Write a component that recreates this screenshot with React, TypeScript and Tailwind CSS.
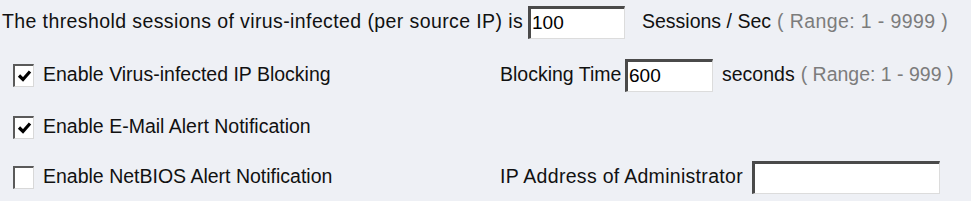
import React from 'react';

function Check({ checked }: { checked: boolean }) {
  return (
    <span className="inline-flex items-center justify-center w-[21px] h-[23px] bg-white border-t-2 border-l-2 border-t-[#5a5a5a] border-l-[#5a5a5a] border-b border-r border-b-[#d8d8d8] border-r-[#d8d8d8] shrink-0">
      {checked && (
        <svg width="15" height="14" viewBox="0 0 15 14">
          <path d="M2 6.5 L6 10.5 L13 2.5" fill="none" stroke="#000" strokeWidth="3.2" />
        </svg>
      )}
    </span>
  );
}

function Field({ value, className }: { value: string; className: string }) {
  return (
    <input
      type="text"
      defaultValue={value}
      className={`h-[33px] bg-white border-t-[3px] border-l-[3px] border-t-[#4a4a4a] border-l-[#4a4a4a] border-b border-r border-b-[#dcdcdc] border-r-[#dcdcdc] px-[1px] text-[19px] text-black outline-none shrink-0 ${className}`}
    />
  );
}

export default function App() {
  return (
    <div
      className="w-[971px] h-[201px] bg-[#eef0f5] text-[19.5px] text-[#111] overflow-hidden"
      style={{ fontFamily: '"Liberation Sans", Arial, sans-serif' }}
    >
      <div className="flex items-center h-[40px] pt-[4px] pl-[2px]">
        <span className="w-[526px] shrink-0 whitespace-nowrap tracking-[0.4px]">The threshold sessions of virus-infected (per source IP) is</span>
        <Field value="100" className="w-[97px]" />
        <span className="ml-[17px] whitespace-nowrap">Sessions / Sec</span>
        <span className="ml-[6px] text-[#7c7c7c] whitespace-nowrap tracking-[0.4px]">( Range: 1 - 9999 )</span>
      </div>

      <div className="flex items-center h-[58px] mt-[6px]">
        <div className="w-[500px] flex items-center pl-[13px]">
          <Check checked />
          <span className="ml-[9px] whitespace-nowrap">Enable Virus-infected IP Blocking</span>
        </div>
        <span className="w-[125px] whitespace-nowrap">Blocking Time</span>
        <Field value="600" className="w-[88px]" />
        <span className="ml-[9px] whitespace-nowrap">seconds</span>
        <span className="ml-[6px] text-[#7c7c7c] whitespace-nowrap">( Range: 1 - 999 )</span>
      </div>

      <div className="flex items-center h-[46px]">
        <div className="w-[500px] flex items-center pl-[13px]">
          <Check checked />
          <span className="ml-[9px] whitespace-nowrap">Enable E-Mail Alert Notification</span>
        </div>
      </div>

      <div className="flex items-center h-[54px]">
        <div className="w-[500px] flex items-center pl-[13px]">
          <Check checked={false} />
          <span className="ml-[9px] whitespace-nowrap">Enable NetBIOS Alert Notification</span>
        </div>
        <span className="w-[252px] whitespace-nowrap tracking-[0.3px]">IP Address of Administrator</span>
        <Field value="" className="w-[188px]" />
      </div>
    </div>
  );
}
